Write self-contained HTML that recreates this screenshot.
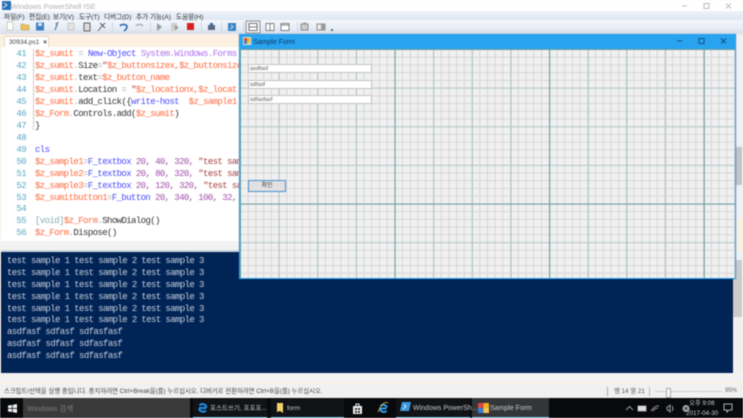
<!DOCTYPE html>
<html><head><meta charset="utf-8">
<style>
html,body{margin:0;padding:0;width:743px;height:418px;overflow:hidden;background:#f1f1f1}
#r{position:absolute;left:0;top:0;width:743px;height:418px;overflow:hidden;filter:blur(.4px);font-family:"Liberation Sans","Noto Sans CJK KR",sans-serif}
#r div,#r span.a,#r svg{position:absolute}
.m{font-size:6.6px;color:#333;top:12.5px;white-space:nowrap;line-height:9px}
.c{position:absolute;left:35px;height:12px;line-height:12px;font:9px/12px "Liberation Mono","Noto Sans CJK KR",monospace;letter-spacing:-.6px;white-space:pre;color:#333}
.n{position:absolute;left:10px;width:16px;text-align:right;font:9px/12px "Liberation Mono",monospace;letter-spacing:-.6px;color:#5aa8c2}
.v{color:#ff6a3c}.o{color:#aaa}.k{color:#4a4aff}.t{color:#b070ee}.s{color:#a84040}.p{color:#a050a8}.b{color:#555}
.l{position:absolute;left:7px;font:9px/12px "Liberation Mono",monospace;letter-spacing:-.6px;color:#c8cfdb;white-space:pre}
.tb{font-size:7px;color:#c8c8c8;white-space:nowrap;line-height:10px;top:403px}
.u{height:1.5px;top:416.5px;background:#7cc4ee}
.tx{left:248px;width:122px;height:7px;background:#fff;border:1px solid #c4c4c4;font-size:5.6px;line-height:8px;color:#555;text-indent:1px}
</style></head><body><div id="r">
<div style="left:0;top:0;width:743px;height:11px;background:#fff"></div>
<div style="left:0;top:11px;width:743px;height:9px;background:linear-gradient(#eef2f9,#dfe7f3)"></div>
<div style="left:0;top:20px;width:743px;height:14px;background:linear-gradient(#f4f7fc,#e6ecf5 60%,#d6dde9)"></div>
<div style="left:0;top:34px;width:743px;height:350px;background:#fbf0e2"></div>

<svg style="left:2px;top:1px" width="9" height="9"><rect width="9" height="9" fill="#2a6fb5"/><path d="M1 7L5 4 2 2" stroke="#cfe8ff" fill="none"/></svg>
<div style="left:11px;top:1.500px;font-size:7.500px;line-height:10px;color:#b0b0b0;white-space:nowrap">Windows PowerShell ISE</div>
<svg style="left:680px;top:1px" width="63" height="10" fill="none" stroke="#aaa" stroke-width=".8"><path d="M2 5H7"/><rect x="24" y="2.500" width="5" height="5"/><path d="M46 2.500L51 7.500M51 2.500L46 7.500"/></svg>

<div class="m" style="left:4px">파일(F)</div><div class="m" style="left:29px">편집(E)</div><div class="m" style="left:53px">보기(V)</div><div class="m" style="left:79px">도구(T)</div><div class="m" style="left:104px">디버그(D)</div><div class="m" style="left:136px">추가 기능(A)</div><div class="m" style="left:176px">도움말(H)</div>

<svg style="left:0;top:20px" width="345" height="14">
<rect x="7" y="2" width="6" height="8" fill="#fff" stroke="#b9b9a0" stroke-width=".7"/>
<path d="M21 4h3l1 1h4v5h-8z" fill="#e9c25e" stroke="#b8963c" stroke-width=".5"/>
<rect x="36" y="2.500" width="8" height="8" fill="#3f7fc0"/><rect x="38" y="3" width="4" height="3" fill="#cfe3f5"/>
<path d="M58 2L55 10M56 3l1 3" stroke="#5a7fb5" stroke-width="1.2" fill="none"/>
<rect x="68" y="3" width="6" height="7" fill="#e4e4e4" stroke="#bbb" stroke-width=".7"/>
<rect x="84" y="3" width="6" height="8" fill="#ddd" stroke="#555" stroke-width=".9"/>
<path d="M98 11L102 6M102 6L105 3M100 3L105 8" stroke="#555" stroke-width=".9" fill="none"/>
<path d="M120 6a4 3 0 0 1 7 0q0 3-3 5" stroke="#2a6cb5" stroke-width="1.600" fill="none"/>
<path d="M136 6a4 3 0 0 1 7 0" stroke="#aaa" stroke-width="1.400" fill="none"/>
<path d="M157 3v8l5-4z" fill="#9a9a9a"/>
<rect x="171" y="3" width="6" height="8" fill="#d0d0d0"/><path d="M175 5v5l4-2.500z" fill="#999"/>
<rect x="187" y="3" width="7" height="7" fill="#d8201c"/>
<rect x="208" y="5" width="7" height="5" fill="#5a6a85"/><rect x="210" y="3" width="3" height="2" fill="#2a6cb5"/>
<rect x="228" y="3" width="8" height="8" fill="#3a85c5"/><path d="M230 9l3-2-2-2" stroke="#fff" fill="none" stroke-width=".7"/>
<path d="M112.500 2v10M150.500 2v10M201.500 2v10M221.500 2v10M243.500 2v10M297.500 2v10" stroke="#c3ccd8" stroke-width=".7"/>
<rect x="246" y="1" width="14" height="12" fill="#eef2f7" stroke="#777" stroke-width=".8"/>
<rect x="249" y="3.500" width="8" height="7" fill="#fff" stroke="#555" stroke-width=".8"/><path d="M249 7h8" stroke="#555" stroke-width=".8"/>
<rect x="266" y="3.500" width="8" height="7" fill="#fff" stroke="#666" stroke-width=".8"/><path d="M270 3.500v7" stroke="#666" stroke-width=".8"/>
<rect x="281" y="3.500" width="8" height="7" fill="#fff" stroke="#666" stroke-width=".8"/><path d="M281 5h8" stroke="#666" stroke-width=".8"/>
<rect x="301" y="4" width="7" height="6" fill="#ccc" stroke="#777" stroke-width=".8"/><rect x="303" y="2.500" width="3" height="2" fill="#999"/>
<rect x="317" y="4" width="8" height="6" fill="#eee" stroke="#777" stroke-width=".8"/><rect x="321" y="4" width="4" height="6" fill="#999"/>
<rect x="331" y="9" width="2" height="2" fill="#666"/>
</svg>

<!-- tab -->
<div style="left:4px;top:36px;width:45px;height:11px;background:#fff;border:1px solid #e4d8c8;border-bottom:0;box-sizing:border-box;font-size:6.500px;line-height:12px;color:#444;text-indent:4px;white-space:nowrap">30934.ps1 <span style="color:#333;font-weight:bold;margin-left:2px">×</span></div>

<!-- editor -->
<div style="left:1px;top:47px;width:240px;height:191px;background:#fff;overflow:hidden"></div>
<div style="left:33px;top:49px;width:1px;height:81px;background:#cfcfcf"></div>
<div style="left:0;top:48px;width:241px;height:190px;overflow:hidden">
<span class="n" style="top:0">41</span><span class="c" style="top:0"><span class="v">$z_sumit</span> <span class="o">=</span> <span class="k">New-Object</span> <span class="t">System.Windows.Forms</span></span>
<span class="n" style="top:12px">42</span><span class="c" style="top:12px"><span class="v">$z_sumit</span><span class="o">.</span>Size<span class="o">=</span><span class="s">"</span><span class="v">$z_buttonsizex,$z_buttonsize</span></span>
<span class="n" style="top:24px">43</span><span class="c" style="top:24px"><span class="v">$z_sumit</span><span class="o">.</span>text<span class="o">=</span><span class="v">$z_button_name</span></span>
<span class="n" style="top:36px">44</span><span class="c" style="top:36px"><span class="v">$z_sumit</span><span class="o">.</span>Location <span class="o">=</span> <span class="s">"</span><span class="v">$z_locationx,$z_locat</span></span>
<span class="n" style="top:48px">45</span><span class="c" style="top:48px"><span class="v">$z_sumit</span><span class="o">.</span>add_click({<span class="k">write-host</span>  <span class="v">$z_sample1</span></span>
<span class="n" style="top:60px">46</span><span class="c" style="top:60px"><span class="v">$z_Form</span><span class="o">.</span>Controls.add(<span class="v">$z_sumit</span>)</span>
<span class="n" style="top:71.500px">47</span><span class="c" style="top:71.500px">}</span>
<span class="n" style="top:83.500px">48</span>
<span class="n" style="top:95.500px">49</span><span class="c" style="top:95.500px"><span class="k">cls</span></span>
<span class="n" style="top:107.500px">50</span><span class="c" style="top:107.500px"><span class="v">$z_sample1</span><span class="o">=</span><span class="k">F_textbox</span> <span class="p">20, 40, 320,</span> <span class="s">"test sample</span></span>
<span class="n" style="top:119.500px">51</span><span class="c" style="top:119.500px"><span class="v">$z_sample2</span><span class="o">=</span><span class="k">F_textbox</span> <span class="p">20, 80, 320,</span> <span class="s">"test sample</span></span>
<span class="n" style="top:131.500px">52</span><span class="c" style="top:131.500px"><span class="v">$z_sample3</span><span class="o">=</span><span class="k">F_textbox</span> <span class="p">20, 120, 320,</span> <span class="s">"test sample</span></span>
<span class="n" style="top:143.500px">53</span><span class="c" style="top:143.500px"><span class="v">$z_sumitbutton1</span><span class="o">=</span><span class="k">F_button</span> <span class="p">20, 340, 100, 32,</span></span>
<span class="n" style="top:155px">54</span>
<span class="n" style="top:167px">55</span><span class="c" style="top:167px"><span class="b" style="color:#8aa">[void]</span><span class="v">$z_Form</span><span class="o">.</span>ShowDialog()</span>
<span class="n" style="top:179px">56</span><span class="c" style="top:179px"><span class="v">$z_Form</span><span class="o">.</span>Dispose()</span>
</div>
<div style="left:1px;top:241px;width:240px;height:9px;background:#f2f2f2"></div>
<div style="left:0;top:238px;width:241px;height:3px;background:#fff"></div>
<div style="left:1px;top:250px;width:240px;height:2px;background:#cdd6e0"></div>

<!-- console -->
<div style="left:1px;top:252px;width:732px;height:121px;background:#012456"></div>
<div class="l" style="top:255px">test sample 1 test sample 2 test sample 3</div>
<div class="l" style="top:267px">test sample 1 test sample 2 test sample 3</div>
<div class="l" style="top:279px">test sample 1 test sample 2 test sample 3</div>
<div class="l" style="top:291px">test sample 1 test sample 2 test sample 3</div>
<div class="l" style="top:303px">test sample 1 test sample 2 test sample 3</div>
<div class="l" style="top:314px">test sample 1 test sample 2 test sample 3</div>
<div class="l" style="top:326px">asdfasf sdfasf sdfasfasf</div>
<div class="l" style="top:338px">asdfasf sdfasf sdfasfasf</div>
<div class="l" style="top:350px">asdfasf sdfasf sdfasfasf</div>

<!-- right scrollbars -->
<div style="left:736px;top:34px;width:6px;height:184px;background:#f0f0f0"></div>
<div style="left:736px;top:147px;width:6px;height:38px;background:#c4c4c4"></div>
<div style="left:733px;top:251px;width:9px;height:122px;background:#f0f0f0"></div>
<div style="left:733px;top:260px;width:9px;height:57px;background:#cbcbcb"></div>
<div style="left:1px;top:373px;width:741px;height:9px;background:#f2f2f2"></div>
<div style="left:0;top:382px;width:743px;height:2px;background:#fbf0e2"></div>

<!-- form -->
<div style="left:239px;top:34px;width:497px;height:245px;background:#27a3f0;box-shadow:0 0 1px rgba(0,50,90,.4)"></div>
<svg style="left:243px;top:37px" width="8" height="8"><rect width="8" height="8" fill="#e8e0d0"/><rect x="1" y="1" width="3" height="3" fill="#d8463c"/><rect x="4" y="1" width="3" height="3" fill="#f0b020"/><rect x="1" y="4" width="3" height="3" fill="#3c7fd0"/><rect x="4" y="4" width="3" height="3" fill="#f5c64a"/></svg>
<div style="left:253px;top:37.500px;font-size:7px;line-height:10px;color:#10365a;white-space:nowrap">Sample Form</div>
<svg style="left:670px;top:36px" width="66" height="10" fill="none" stroke="#16507f" stroke-width="1"><path d="M7 5H12"/><rect x="29" y="2.500" width="5" height="5"/><path d="M51 2.500L56 7.500M56 2.500L51 7.500"/></svg>
<div style="left:240px;top:48.700px;width:495px;height:229px;background-color:#f0f0f0;background-image:
linear-gradient(to right,#6f9f9f 1px,transparent 1px),
linear-gradient(to bottom,#6f9a9a 1px,transparent 1px),
linear-gradient(to right,#a8c2c2 1px,transparent 1px),
linear-gradient(to bottom,#b4caca 1px,transparent 1px),
linear-gradient(to right,#d6d6d6 1px,transparent 1px),
linear-gradient(to bottom,#d6d6d6 1px,transparent 1px);
background-size:154.600px 100%,100% 154.600px,38.650px 100%,100% 38.650px,7.730px 100%,100% 7.730px"></div>
<div class="tx" style="top:64px">asdfasf</div>
<div class="tx" style="top:79.500px">sdfasf</div>
<div class="tx" style="top:95px">sdfasfasf</div>
<div style="left:248px;top:180px;width:36px;height:10px;background:#e1e1e1;border:1px solid #4a90d0;font-size:6px;line-height:11px;color:#444;text-align:center">확인</div>

<!-- status bar -->
<div style="left:0;top:384px;width:743px;height:14px;background:#f1f1f1"></div>
<div style="left:4px;top:386.500px;font-size:6.350px;line-height:9px;color:#444;white-space:nowrap">스크립트/선택을 실행 중입니다. 중지하려면 Ctrl+Break을(를) 누르십시오. 디버거로 전환하려면 Ctrl+B을(를) 누르십시오.</div>
<div style="left:607px;top:387px;width:1px;height:9px;background:#aaa"></div>
<div style="left:614px;top:386.500px;font-size:6.300px;line-height:9px;color:#555;white-space:nowrap">행 14 열 21</div>
<div style="left:649px;top:387px;width:1px;height:9px;background:#bbb"></div>
<div style="left:655px;top:391px;width:67px;height:1px;background:#ccc"></div>
<div style="left:666px;top:388px;width:3px;height:8px;background:#f8f8f8;border:1px solid #aaa"></div>
<div style="left:725px;top:387px;font-size:6px;line-height:9px;color:#666">95%</div>

<!-- taskbar -->
<div style="left:0;top:398px;width:743px;height:20px;background:#08090b"></div>
<div style="left:23px;top:398px;width:167px;height:20px;background:#3a3a3a"></div>
<svg style="left:8px;top:404px" width="9" height="9" fill="#f0f0f0"><path d="M0 1.500L4 1V4H0zM4.700.9L9 0V4H4.700zM0 4.800H4V8L0 7.500zM4.700 4.800H9V9L4.700 8.100z"/></svg>
<div class="tb" style="left:27px;top:404px;font-size:7.500px;color:#7d7d7d">Windows 검색</div>

<div style="left:193px;top:398px;width:74px;height:20px;background:#111316"></div>
<div style="left:271px;top:398px;width:73px;height:20px;background:#111316"></div>
<div style="left:396px;top:398px;width:74px;height:20px;background:#111316"></div>
<div style="left:472px;top:398px;width:77px;height:20px;background:#343537"></div>
<div class="u" style="left:193px;width:74px"></div><div class="u" style="left:271px;width:73px"></div><div class="u" style="left:396px;width:74px"></div><div class="u" style="left:472px;width:77px"></div>

<svg style="left:197px;top:402px" width="11" height="11" fill="none" stroke="#1f8fe8" stroke-width="2"><path d="M9.500 6H2M2.500 3.500A4 4 0 0 1 9.500 5.500M2 6.500A4.200 4.200 0 0 0 9 8.500"/></svg>
<div class="tb" style="left:210px;top:403.500px;font-size:6.500px">포스트쓰기, 포포포...</div>
<svg style="left:276px;top:403px" width="8" height="10"><path d="M1 0H7V10L4 8 1 9z" fill="#f5d36a"/></svg>
<div class="tb" style="left:287px;top:403.500px;font-size:6.500px">form</div>
<svg style="left:353px;top:403px" width="9" height="11"><path d="M0 3H9V11H0z" fill="#f0f0f0"/><path d="M3 3V1H6V3" stroke="#f0f0f0" fill="none"/><rect x="2" y="5" width="2" height="2" fill="#333"/><rect x="5" y="5" width="2" height="2" fill="#333"/><rect x="2" y="8" width="2" height="2" fill="#333"/><rect x="5" y="8" width="2" height="2" fill="#333"/></svg>
<svg style="left:377px;top:402px" width="12" height="12" fill="none" stroke="#2f9be8" stroke-width="2"><path d="M9.500 6.500H3M3.500 4A4 4 0 0 1 10 5.500M3 7A4 4 0 0 0 9.500 9"/><path d="M1 10Q6-2 11 1" stroke-width=".8" stroke="#e8c048"/></svg>
<svg style="left:400px;top:402px" width="11" height="11"><path d="M2 0H11L9 9H0z" fill="#3c98dc"/><path d="M3 7L6 4.500 4 2.500" stroke="#fff" stroke-width=".8" fill="none"/></svg>
<div class="tb" style="left:413px;top:403.500px;font-size:7px">Windows PowerSh...</div>
<svg style="left:478px;top:403px" width="11" height="10"><rect width="5.500" height="5" fill="#d8463c"/><rect x="5.500" width="5.500" height="5" fill="#f0b020"/><rect y="5" width="5.500" height="5" fill="#3c7fd0"/><rect x="5.500" y="5" width="5.500" height="5" fill="#f5c64a"/></svg>
<div class="tb" style="left:490px;top:403.500px;font-size:7px">Sample Form</div>

<svg style="left:625px;top:402px" width="65" height="12" fill="none" stroke="#bdbdbd" stroke-width=".8"><path d="M1 8L4.500 4.500 8 8"/><rect x="13" y="4" width="8" height="5" fill="#ddd"/><path d="M26 9Q30 3 34 4M28 9Q30 6 33 6"/><path d="M42 5v3h1l2 2V3L43 5zM47 4Q49 6.500 47 9"/><circle cx="61" cy="6.500" r="3.500" fill="#aaa" stroke="none"/><path d="M59.500 5L62.500 8M62.500 5L59.500 8" stroke="#222"/></svg>
<div style="left:686px;top:399px;width:32px;text-align:center;font-size:6.300px;line-height:9px;color:#ccc;white-space:nowrap">오후 9:06</div>
<div style="left:686px;top:409px;width:32px;text-align:center;font-size:6.300px;line-height:9px;color:#ccc;white-space:nowrap">2017-04-30</div>
<svg style="left:723px;top:403px" width="10" height="10" fill="none" stroke="#ddd" stroke-width=".8"><path d="M1 1H9V7H6L4 9V7H1z"/></svg>
</div></body></html>
